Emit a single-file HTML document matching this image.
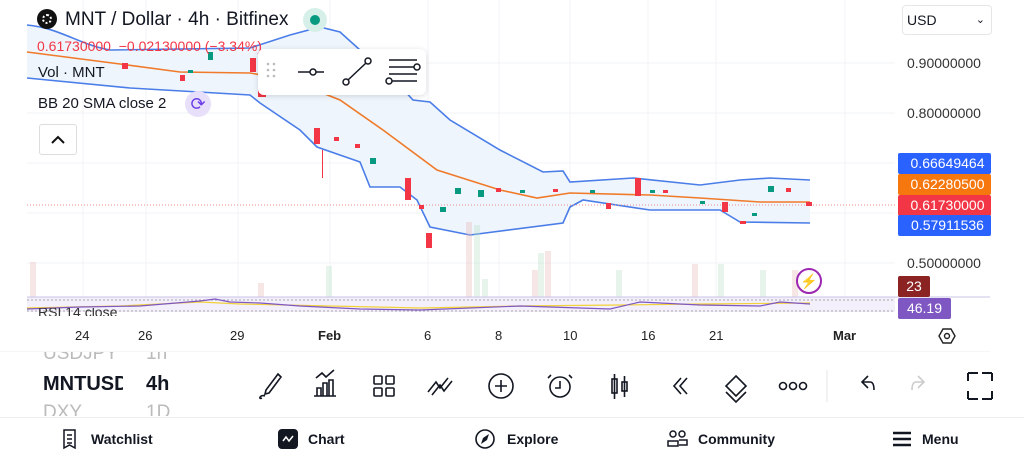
<!DOCTYPE html>
<html><head><meta charset="utf-8"><style>
*{margin:0;padding:0;box-sizing:border-box}
body{width:1024px;height:461px;overflow:hidden;background:#fff;font-family:"Liberation Sans",sans-serif;position:relative;color:#131722}
.abs{position:absolute}
.pl{position:absolute;left:898px;width:80px;height:21px;color:#fff;font-size:14px;line-height:21px;text-align:center;border-radius:2px}
.ax{position:absolute;left:907px;font-size:14px;color:#333}
.t{position:absolute;top:328px;font-size:13px;color:#222}
.nav{position:absolute;top:431px;font-size:14px;font-weight:bold;color:#131722}
</style></head><body>
<svg class="abs" style="left:0;top:0" width="1024" height="352">
<g stroke="#f0f3f7" stroke-width="1">
<line x1="27" y1="63" x2="895" y2="63"/><line x1="27" y1="113" x2="895" y2="113"/><line x1="27" y1="163" x2="895" y2="163"/><line x1="27" y1="213" x2="895" y2="213"/><line x1="27" y1="263" x2="895" y2="263"/>
<line x1="83" y1="0" x2="83" y2="312"/><line x1="146" y1="0" x2="146" y2="312"/><line x1="238" y1="0" x2="238" y2="312"/><line x1="330" y1="0" x2="330" y2="312"/><line x1="428" y1="0" x2="428" y2="312"/><line x1="499" y1="0" x2="499" y2="312"/><line x1="570" y1="0" x2="570" y2="312"/><line x1="648" y1="0" x2="648" y2="312"/><line x1="716" y1="0" x2="716" y2="312"/><line x1="845" y1="0" x2="845" y2="312"/>
</g>
<path d="M27,25 C60,28 80,45 110,50 L250,48 290,35 320,27 340,32 360,50 390,75 413,100 430,102 450,120 500,150 543,172 563,171 570,182 633,178 700,185 740,180 770,178 810,180 L810,223 740,222 720,210 650,210 583,200 570,207 563,223 470,235 430,227 417,200 400,187 370,187 360,162 317,147 300,130 260,103 250,95 130,88 27,78Z" fill="#eef5fc"/>
<path d="M27,25 C60,28 80,45 110,50 L250,48 290,35 320,27 340,32 360,50 390,75 413,100 430,102 450,120 500,150 543,172 563,171 570,182 633,178 700,185 740,180 770,178 810,180" fill="none" stroke="#4a7de8" stroke-width="1.6"/>
<path d="M27,78 L130,88 250,95 260,103 300,130 317,147 360,162 370,187 400,187 417,200 430,227 470,235 563,223 570,207 583,200 650,210 720,210 740,222 810,223" fill="none" stroke="#4a7de8" stroke-width="1.6"/>
<path d="M27,52 L120,64 180,72 250,73 290,80 340,100 383,130 437,170 500,190 537,198 570,193 650,195 700,198 760,202 810,202" fill="none" stroke="#f07a2a" stroke-width="1.6"/>
<line x1="27" y1="205" x2="895" y2="205" stroke="#f08a8a" stroke-dasharray="1,2"/>
<g fill="#f23645">
<rect x="122" y="63" width="6" height="6"/><rect x="180" y="75" width="5" height="6"/><rect x="250" y="58" width="6" height="14"/><rect x="258" y="75" width="8" height="22"/><rect x="314" y="128" width="6" height="16"/><rect x="334" y="137" width="5" height="4"/><rect x="355" y="144" width="5" height="4"/><rect x="405" y="178" width="6" height="22"/><rect x="426" y="233" width="6" height="15"/><rect x="419" y="205" width="5" height="4"/><rect x="496" y="188" width="5" height="4"/><rect x="553" y="189" width="5" height="3"/><rect x="606" y="203" width="5" height="6"/><rect x="635" y="178" width="6" height="18"/><rect x="663" y="190" width="5" height="3"/><rect x="722" y="202" width="6" height="10"/><rect x="740" y="221" width="6" height="3"/><rect x="786" y="188" width="5" height="4"/><rect x="806" y="202" width="6" height="4"/>
<rect x="322" y="150" width="1" height="28"/>
</g>
<g fill="#089981">
<rect x="208" y="52" width="5" height="8"/><rect x="188" y="70" width="5" height="3"/><rect x="370" y="158" width="6" height="6"/><rect x="455" y="188" width="6" height="6"/><rect x="478" y="190" width="6" height="7"/><rect x="520" y="190" width="5" height="3"/><rect x="590" y="190" width="5" height="3"/><rect x="650" y="190" width="5" height="3"/><rect x="700" y="201" width="5" height="3"/><rect x="752" y="213" width="5" height="3"/><rect x="768" y="186" width="6" height="6"/><rect x="440" y="207" width="6" height="5"/>
</g>
<g opacity="0.35">
<rect x="30" y="262" width="6" height="35" fill="#e8b8b8"/><rect x="466" y="222" width="6" height="75" fill="#e8b8b8"/><rect x="474" y="225" width="6" height="72" fill="#b8e0c8"/><rect x="482" y="279" width="6" height="18" fill="#b8e0c8"/><rect x="532" y="270" width="6" height="27" fill="#e8b8b8"/><rect x="538" y="253" width="6" height="44" fill="#b8e0c8"/><rect x="545" y="251" width="6" height="46" fill="#e8b8b8"/><rect x="616" y="270" width="6" height="27" fill="#b8e0c8"/><rect x="692" y="264" width="6" height="33" fill="#e8b8b8"/><rect x="718" y="264" width="6" height="33" fill="#b8e0c8"/><rect x="760" y="270" width="6" height="27" fill="#b8e0c8"/><rect x="792" y="270" width="6" height="27" fill="#e8b8b8"/><rect x="326" y="266" width="6" height="31" fill="#b8e0c8"/><rect x="258" y="283" width="6" height="14" fill="#e8b8b8"/>
</g>
<rect x="27" y="297" width="868" height="15" fill="#f3effb"/>
<line x1="27" y1="297" x2="990" y2="297" stroke="#c9c3e6"/>
<line x1="27" y1="300" x2="895" y2="300" stroke="#aaa" stroke-dasharray="2,2"/>
<line x1="27" y1="311" x2="895" y2="311" stroke="#aaa" stroke-dasharray="2,2"/>
<path d="M27,308 L120,306 200,302 240,304 330,306 420,308 520,306 620,305 700,304 810,303" fill="none" stroke="#f2d23a" stroke-width="1.2"/>
<path d="M27,309 L80,307 140,306 200,301 215,299 230,302 260,303 300,306 360,309 420,310 520,306 610,309 640,302 700,305 760,306 780,302 810,304" fill="none" stroke="#7e57c2" stroke-width="1.2"/>
<line x1="0" y1="352" x2="990" y2="352" stroke="#eee"/>
</svg>
<div class="abs" style="left:37px;top:9px;width:20px;height:20px;border-radius:50%;background:#111"><div style="position:absolute;left:5px;top:5px;width:10px;height:10px;border-radius:50%;border:2px dotted #fff"></div></div>
<div class="abs" style="left:65px;top:9px;font-size:19px;color:#131722">MNT / Dollar · 4h · Bitfinex</div>
<div class="abs" style="left:303px;top:8px;width:24px;height:24px;border-radius:50%;background:#d6efe8"><div style="position:absolute;left:7px;top:7px;width:10px;height:10px;border-radius:50%;background:#089981"></div></div>
<div class="abs" style="left:37px;top:38px;font-size:14px;color:#f23645">0.61730000&nbsp; −0.02130000 (−3.34%)</div>
<div class="abs" style="left:38px;top:64px;font-size:15px">Vol · MNT</div>
<div class="abs" style="left:38px;top:95px;font-size:15px">BB 20 SMA close 2</div>
<div class="abs" style="left:185px;top:91px;width:26px;height:26px;border-radius:50%;background:#e8e0fa;color:#6c3ee8;font-size:18px;text-align:center;line-height:26px">⟳</div>
<div class="abs" style="left:39px;top:124px;width:38px;height:31px;border:1px solid #ddd;border-radius:3px;background:#fff"><svg width="36" height="29"><path d="M12,18 L18,12 24,18" fill="none" stroke="#111" stroke-width="2"/></svg></div>
<div class="abs" style="left:258px;top:49px;width:168px;height:46px;background:#fff;border-radius:6px;box-shadow:0 1px 6px rgba(0,0,0,.15)">
<svg width="168" height="46"><g fill="#bbb"><circle cx="10" cy="15" r="1.3"/><circle cx="16" cy="15" r="1.3"/><circle cx="10" cy="21" r="1.3"/><circle cx="16" cy="21" r="1.3"/><circle cx="10" cy="27" r="1.3"/><circle cx="16" cy="27" r="1.3"/></g>
<g fill="none" stroke="#131722" stroke-width="1.5"><line x1="40" y1="23" x2="52" y2="23"/><circle cx="55" cy="23" r="3"/><line x1="58" y1="23" x2="66" y2="23"/>
<circle cx="88" cy="33" r="3"/><circle cx="110" cy="12" r="3"/><line x1="90" y1="31" x2="108" y2="14"/>
<line x1="131" y1="11" x2="159" y2="11"/><line x1="131" y1="18" x2="156" y2="18"/><circle cx="159" cy="18" r="3"/><line x1="131" y1="25" x2="159" y2="25"/><circle cx="131" cy="32" r="3"/><line x1="134" y1="32" x2="159" y2="32"/></g></svg></div>
<div class="abs" style="left:902px;top:5px;width:90px;height:30px;border:1px solid #e6e6e6;border-radius:4px;font-size:14px;line-height:28px;padding-left:4px">USD<span style="position:absolute;right:6px;font-size:11px">⌄</span></div>
<div class="ax" style="top:55px">0.90000000</div>
<div class="ax" style="top:105px">0.80000000</div>
<div class="ax" style="top:255px">0.50000000</div>
<div class="pl" style="top:153px;background:#2962ff;width:93px;padding-left:6px">0.66649464</div>
<div class="pl" style="top:174px;background:#f7770f;width:93px;padding-left:6px">0.62280500</div>
<div class="pl" style="top:195px;background:#f23645;width:93px;padding-left:6px">0.61730000</div>
<div class="pl" style="top:215px;background:#2962ff;width:93px;padding-left:6px">0.57911536</div>
<div class="pl" style="top:276px;background:#8b2323;width:32px">23</div>
<div class="pl" style="top:298px;background:#7e57c2;width:53px">46.19</div>
<div class="abs" style="left:796px;top:268px;width:26px;height:26px;border-radius:50%;border:2px solid #9c27b0;color:#9c27b0;font-size:14px;text-align:center;line-height:22px">⚡</div>
<div class="abs" style="left:38px;top:308px;font-size:14px;color:#333;height:8px;overflow:hidden;line-height:8px">RSI 14 close</div>
<div class="t" style="left:75px">24</div><div class="t" style="left:138px">26</div><div class="t" style="left:230px">29</div><div class="t" style="left:318px;font-weight:bold">Feb</div><div class="t" style="left:424px">6</div><div class="t" style="left:495px">8</div><div class="t" style="left:563px">10</div><div class="t" style="left:641px">16</div><div class="t" style="left:709px">21</div><div class="t" style="left:833px;font-weight:bold">Mar</div>
<svg class="abs" style="left:937px;top:326px" width="20" height="20"><path d="M6,3 L14,3 18,10 14,17 6,17 2,10Z" fill="none" stroke="#222" stroke-width="1.4"/><circle cx="10" cy="10" r="2.5" fill="none" stroke="#222" stroke-width="1.4"/></svg>
<div class="abs" style="left:43px;top:352px;width:80px;height:12px;overflow:hidden;font-size:19px;color:#bbb;line-height:4px">USDJPY</div>
<div class="abs" style="left:146px;top:352px;width:30px;height:12px;overflow:hidden;font-size:19px;color:#bbb;line-height:4px">1h</div>
<div class="abs" style="left:43px;top:373px;width:80px;overflow:hidden;white-space:nowrap;font-size:20px;font-weight:bold">MNTUSD</div>
<div class="abs" style="left:146px;top:373px;font-size:20px;font-weight:bold">4h</div>
<div class="abs" style="left:43px;top:402px;height:14px;overflow:hidden;font-size:19px;color:#bbb">DXY</div>
<div class="abs" style="left:146px;top:402px;height:14px;overflow:hidden;font-size:19px;color:#bbb">1D</div>
<svg class="abs" style="left:250px;top:368px" width="760" height="36"><g fill="none" stroke="#131722" stroke-width="1.6">
<path d="M16,22 L28,6 31,9 19,25 15,26Z M12,30 C8,32 10,26 15,28"/>
<path d="M66,10 L72,5 76,9 84,2 M67,28 V20 H71 V28 M73,28 V15 H77 V28 M79,28 V12 H83 V28 M64,28 H86"/>
<rect x="124" y="8" width="8" height="8" rx="1"/><rect x="136" y="8" width="8" height="8" rx="1"/><rect x="124" y="20" width="8" height="8" rx="1"/><rect x="136" y="20" width="8" height="8" rx="1"/>
<path d="M178,24 L186,14 190,20 198,10 M182,27 L190,17 194,23 202,13"/>
<circle cx="251" cy="18" r="12"/><path d="M251,12 V24 M245,18 H257"/>
<circle cx="310" cy="19" r="10"/><path d="M310,13 V20 H305 M301,7 L298,10 M319,7 L322,10"/>
<rect x="362" y="11" width="5" height="14"/><rect x="372" y="14" width="5" height="9"/><path d="M364.5,6 V31 M374.5,8 V29"/>
<path d="M431,10 L424,18 431,26 M437,10 L430,18 437,26"/>
<path d="M486,8 L496,18 486,28 476,18Z M476,24 L486,34 496,24"/>
<circle cx="533" cy="18" r="3.5"/><circle cx="543" cy="18" r="3.5"/><circle cx="553" cy="18" r="3.5"/>
<path d="M618,20 L612,14 618,8 M612,14 H620 C623,14 624,18 624,22"/>
<path stroke="#ccc" d="M668,20 L674,14 668,8 M674,14 H666 C663,14 662,18 662,22"/>
<path d="M718,5 H728 M718,5 V13 M742,5 H732 M742,5 V13 M718,31 H728 M718,31 V23 M742,31 H732 M742,31 V23" stroke-width="2"/>
</g><line x1="577" y1="2" x2="577" y2="34" stroke="#e5e5e5"/></svg>
<div class="abs" style="left:0;top:417px;width:1024px;height:1px;background:#eee"></div>
<svg class="abs" style="left:60px;top:428px" width="20" height="22"><path d="M4,2 H15 V20 L9.5,17 4,20Z M7,7 H12 M7,11 H12 M7,15 H12" fill="none" stroke="#131722" stroke-width="1.5"/></svg>
<div class="nav" style="left:91px">Watchlist</div>
<div class="abs" style="left:278px;top:429px;width:20px;height:20px;border-radius:4px;background:#131722"><svg width="20" height="20"><path d="M5,12 L8,8 11,12 15,7" fill="none" stroke="#fff" stroke-width="1.5"/></svg></div>
<div class="nav" style="left:308px">Chart</div>
<svg class="abs" style="left:474px;top:428px" width="22" height="22"><circle cx="11" cy="11" r="9" fill="none" stroke="#131722" stroke-width="1.6"/><path d="M15,6 L9,10 7,16 13,12Z" fill="#131722"/></svg>
<div class="nav" style="left:507px">Explore</div>
<svg class="abs" style="left:666px;top:428px" width="24" height="22"><g fill="none" stroke="#131722" stroke-width="1.5"><circle cx="7" cy="6" r="3"/><circle cx="16" cy="6" r="3"/><path d="M2,18 V13 H12 V18Z M13,12 H21 V17 H13"/></g></svg>
<div class="nav" style="left:698px">Community</div>
<svg class="abs" style="left:892px;top:430px" width="20" height="18"><path d="M1,3 H19 M1,9 H19 M1,15 H19" stroke="#131722" stroke-width="2.5"/></svg>
<div class="nav" style="left:922px">Menu</div>
</body></html>
